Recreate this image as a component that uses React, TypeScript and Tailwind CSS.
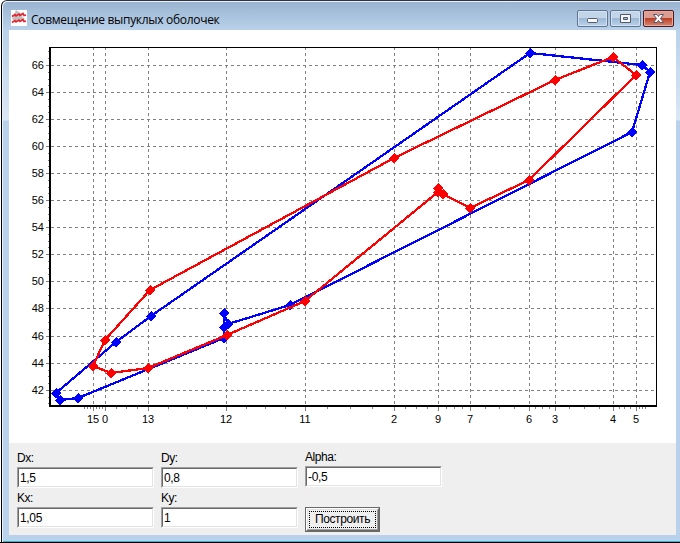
import React, { useState } from 'react';

type Point = [number, number];

const yTicks = [
  { label: '66', y: 65 },
  { label: '64', y: 92 },
  { label: '62', y: 119 },
  { label: '60', y: 146 },
  { label: '58', y: 173 },
  { label: '56', y: 200 },
  { label: '54', y: 227 },
  { label: '52', y: 254 },
  { label: '50', y: 281 },
  { label: '48', y: 308 },
  { label: '46', y: 336 },
  { label: '44', y: 363 },
  { label: '42', y: 390 },
];

const xTicks = [
  { label: '15', x: 93 },
  { label: '0', x: 105 },
  { label: '13', x: 148 },
  { label: '12', x: 226 },
  { label: '11', x: 305 },
  { label: '2', x: 394 },
  { label: '9', x: 438 },
  { label: '7', x: 470 },
  { label: '6', x: 529 },
  { label: '3', x: 555 },
  { label: '4', x: 613 },
  { label: '5', x: 636 },
];

const minorX = [
  84, 87, 90, 96, 99, 102, 116, 126, 137, 168, 187, 206, 246, 265, 285, 327, 350, 372, 405, 416, 427,
  446, 454, 462, 485, 499, 514, 535, 542, 549, 569, 584, 599, 619, 624, 630, 639, 642, 645,
];

const minorY = [
  51, 58, 72, 79, 85, 99, 106, 112, 126, 133, 139, 153, 160, 166, 180, 187, 193, 207, 214, 220, 234,
  241, 247, 261, 268, 274, 288, 295, 301, 315, 322, 329, 343, 349, 356, 370, 376, 383, 397, 403,
];

const blueHull: Point[] = [
  [56, 393], [60, 400], [78, 398], [224, 338], [224, 327], [224, 313], [228, 324], [290, 305],
  [632, 132], [650, 72], [642, 65], [530, 53], [151, 316], [116, 342],
];

const redHull: Point[] = [
  [93, 366], [111, 373], [148, 368], [227, 335], [305, 301], [438, 192], [438, 188], [443, 194],
  [470, 208], [529, 180], [636, 75], [613, 57], [555, 80], [394, 158], [150, 290], [105, 340],
];

const Hull: React.FC<{ points: Point[]; color: string }> = ({ points, color }) => (
  <g fill={color} stroke={color}>
    <polygon points={points.map((p) => p.join(',')).join(' ')} fill="none" strokeWidth="2.3" />
    {points.map(([x, y]) => (
      <path key={`${x}-${y}`} d={`M${x - 5.2} ${y + 0.3}l5.4 -5.4 5.4 5.4 -5.4 5.4z`} stroke="none" />
    ))}
  </g>
);

const Chart: React.FC = () => (
  <svg className="block" width="667" height="413" viewBox="9 30 667 413" shapeRendering="crispEdges">
    {/* Grid */}
    <g stroke="#808080" strokeDasharray="3 3">
      {yTicks.map(({ y }) => (
        <line key={y} x1="51" x2="655" y1={y + 0.5} y2={y + 0.5} />
      ))}
      {xTicks.map(({ x }) => (
        <line key={x} x1={x + 0.5} x2={x + 0.5} y1="47" y2="405" />
      ))}
    </g>

    {/* Axes and ticks */}
    <path d="M49 47h608v360h-608z M51 48v357h605v-357z" fill="#000" fillRule="evenodd" />
    <g fill="#808080">
      {yTicks.map(({ y }) => (
        <rect key={y} x="46" y={y} width="3" height="1" />
      ))}
      {minorY.map((y) => (
        <rect key={y} x="48" y={y} width="1" height="1" />
      ))}
      {xTicks.map(({ x }) => (
        <rect key={x} x={x} y="407" width="1" height="4" />
      ))}
      {minorX.map((x) => (
        <rect key={x} x={x} y="407" width="1" height="2" />
      ))}
    </g>

    <g fontFamily="'Liberation Sans', Arial, sans-serif" fontSize="11" fill="#000">
      {yTicks.map(({ label, y }) => (
        <text key={label} x="44" y={y + 4} textAnchor="end">{label}</text>
      ))}
      {xTicks.map(({ label, x }) => (
        <text key={label} x={x} y="423" textAnchor="middle">{label}</text>
      ))}
    </g>

    <Hull points={blueHull} color="#0000ff" />
    <Hull points={redHull} color="#ff0000" />
  </svg>
);

const captionButton =
  'h-[17px] w-[31px] rounded-[2px] border border-[#5f7591] bg-linear-to-b from-[#c3d5e8] from-45% via-[#9db8d4] via-50% to-[#b9d3ec] shadow-[inset_0_0_0_1px_#d3e2f1]';

const WindowButtons: React.FC = () => (
  <div className="ml-auto flex gap-[2px]">
    <button className={captionButton} aria-label="Minimize">
      <svg width="29" height="15" viewBox="1 1 29 15" className="block">
        <rect x="10.5" y="8.5" width="10" height="4" rx="1" fill="#f8f8f8" stroke="#535b6b" />
      </svg>
    </button>
    <button className={captionButton} aria-label="Maximize">
      <svg width="29" height="15" viewBox="1 1 29 15" className="block">
        <path d="M10.5 4.5h10v8h-10z M13.5 7.5v2h4v-2z" fill="#f8f8f8" fillRule="evenodd" stroke="#535b6b" />
      </svg>
    </button>
    <button
      className="h-[17px] w-[31px] rounded-[2px] border border-[#53181c] bg-linear-to-b from-[#dc9d93] from-45% via-[#bd3e26] via-50% to-[#d48670] shadow-[inset_0_0_0_1px_#e6aaa1]"
      aria-label="Close"
    >
      <svg width="29" height="15" viewBox="1 1 29 15" className="block">
        <path d="M10.5 4.5h3.5l1.5 2 1.5-2h3.5l-3 4 3 4h-3.5l-1.5-2-1.5 2h-3.5l3-4z" fill="#f8f8f8" stroke="#535b6b" />
      </svg>
    </button>
  </div>
);

const Field: React.FC<{ label: string; initial: string; className?: string }> = ({ label, initial, className = '' }) => {
  const [value, setValue] = useState(initial);

  return (
    <label className={`block w-[137px] ${className}`}>
      <span className="block h-[17px] text-[12px] leading-4 tracking-[-0.45px]">{label}</span>
      <span className="block h-[21px] border border-t-[#a0a0a0] border-l-[#a0a0a0] border-r-white border-b-white">
        <input
          value={value}
          onChange={(e) => setValue(e.target.value)}
          className="block h-[19px] w-full border border-t-[#696969] border-l-[#696969] border-r-[#e3e3e3] border-b-[#e3e3e3] bg-white px-px text-[12px] leading-4 tracking-[-0.35px] outline-none"
        />
      </span>
    </label>
  );
};

const App: React.FC = () => (
  <div className="h-[543px] w-[680px] overflow-hidden border-b border-black bg-white pl-px font-['Liberation_Sans',Arial,sans-serif] text-black">
    <div className="h-[542px] rounded-tl-[6px] border-t border-l border-t-[#30343c] border-l-black bg-[#e8f0f8] pt-px pl-px">
      <div className="flex h-[540px] flex-col rounded-tl-[5px] border-b border-[#35b5c8] bg-[linear-gradient(to_bottom,#b9d1ea_28px,#dae7f5_118px,#b9d1ea_119px)] pl-[6px]">
        {/* Title bar */}
        <div className="-ml-[6px] flex h-7 shrink-0 items-start rounded-tl-[5px] bg-linear-to-b from-[#9ab4d1] to-[#b9d1ea] pt-2 pr-[6px] pl-2">
          <svg width="16" height="16" viewBox="0 0 16 16" className="shrink-0">
            <rect width="16" height="16" fill="#fff" />
            <path d="M5 0l6 4v3l3 2-9 3-4-3z" fill="#c0c0c0" />
            <path d="M1 6.5l3-2 1 1.5 3-2 1 1.5 3-2 1 2 2-.5M1 12.5l3-2 1 1.5 3-2 1 1.5 3-2 1 2 2-.5" fill="none" stroke="#e8202a" strokeWidth="1.6" />
          </svg>
          <span className="ml-1 font-['Open_Sans',sans-serif] text-[12px] leading-[19px] tracking-[-0.3px] whitespace-nowrap">
            Совмещение выпуклых оболочек
          </span>
          <WindowButtons />
        </div>

        <div className="w-[667px] shrink-0 bg-white">
          <Chart />
        </div>

        {/* Parameters */}
        <div className="flex h-[92px] w-[667px] shrink-0 gap-[7px] bg-[#efefef] pt-[7px] pl-2">
          <div>
            <Field label="Dx:" initial="1,5" />
            <Field label="Kx:" initial="1,05" className="mt-0.5" />
          </div>
          <div>
            <Field label="Dy:" initial="0,8" />
            <Field label="Ky:" initial="1" className="mt-0.5" />
          </div>
          <div>
            <Field label="Alpha:" initial="-0,5" className="-mt-px" />
            <button className="mt-5 block h-[25px] w-[75px] border border-[#696969]">
              <span className="block h-[23px] border border-t-white border-l-white border-r-[#696969] border-b-[#696969]">
                <span className="block h-[21px] border border-t-[#e3e3e3] border-l-[#e3e3e3] border-r-[#a0a0a0] border-b-[#a0a0a0] bg-[#efefef] p-px">
                  <span className="block h-[17px] border border-dotted border-black text-[12px] leading-[15px] tracking-[-0.4px] whitespace-nowrap">
                    Построить
                  </span>
                </span>
              </span>
            </button>
          </div>
        </div>
      </div>
    </div>
  </div>
);

export default App;
